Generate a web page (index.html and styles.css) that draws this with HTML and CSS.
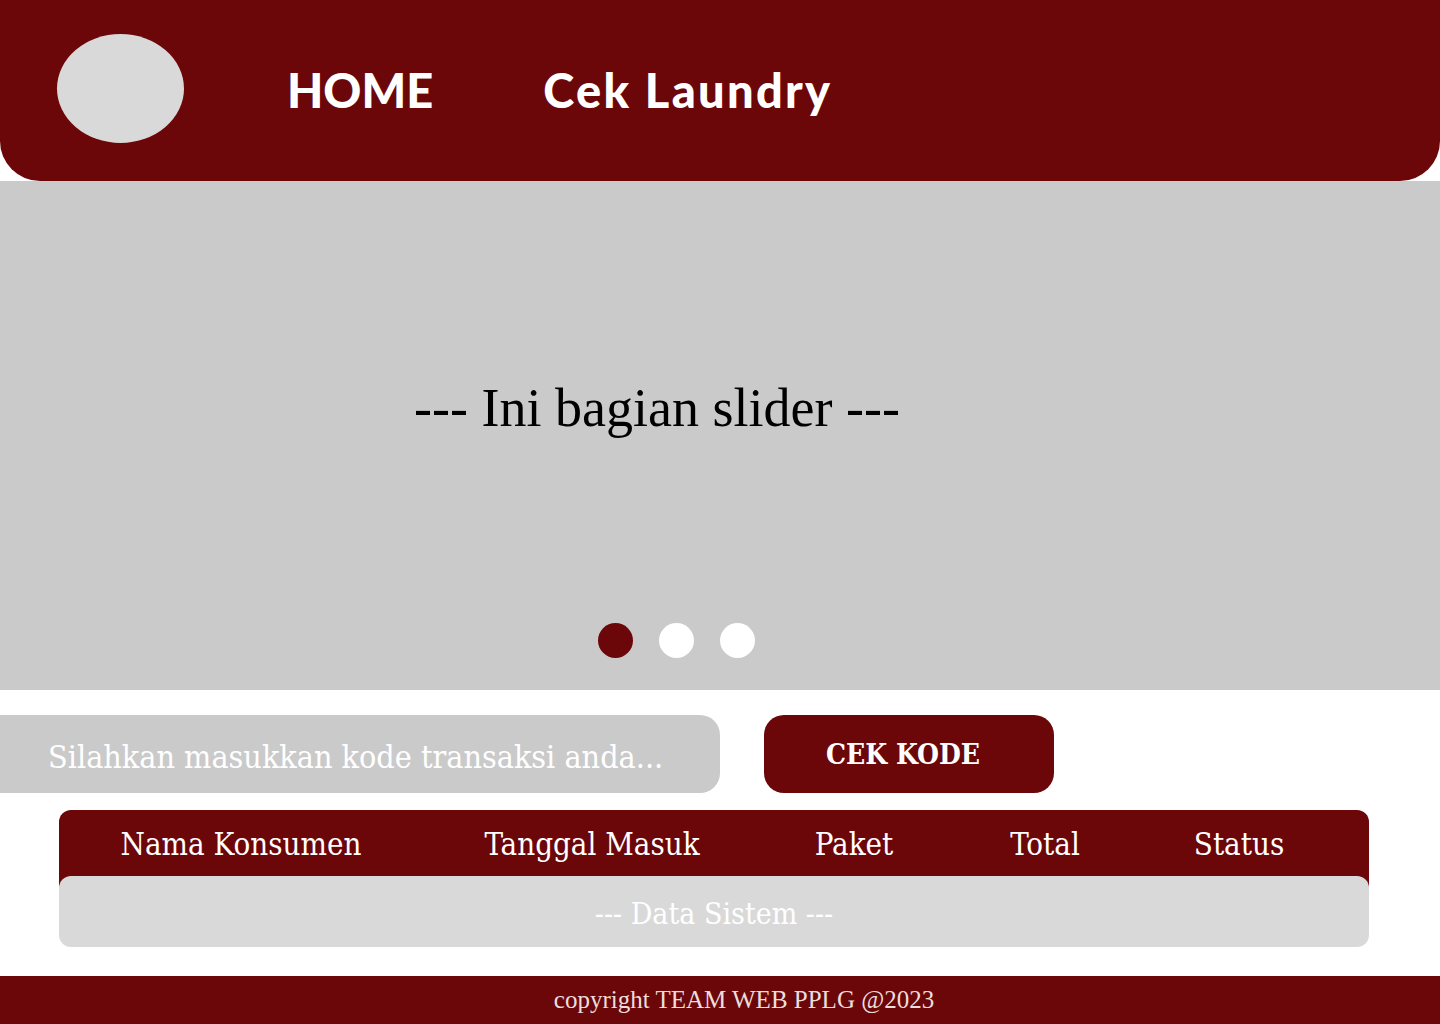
FILE: index.html
```html
<!DOCTYPE html>
<html lang="id">
<head>
<meta charset="utf-8">
<title>Cek Laundry</title>
<link rel="stylesheet" href="styles.css">
</head>
<body>
<header class="topbar">
  <div class="logo"></div>
  <nav class="nav">
    <a class="nav-link" href="#">HOME</a>
    <a class="nav-link nav-link-wide" href="#">Cek Laundry</a>
  </nav>
</header>
<section class="slider">
  <div class="slider-text">--- Ini bagian slider ---</div>
  <div class="dots">
    <span class="dot active"></span>
    <span class="dot"></span>
    <span class="dot"></span>
  </div>
</section>
<section class="search">
  <input class="search-input" type="text" placeholder="Silahkan masukkan kode transaksi anda...">
  <button class="search-btn" type="button">CEK KODE</button>
</section>
<section class="table">
  <div class="table-head">
    <div class="th">Nama Konsumen</div>
    <div class="th">Tanggal Masuk</div>
    <div class="th">Paket</div>
    <div class="th">Total</div>
    <div class="th">Status</div>
  </div>
  <div class="table-body">--- Data Sistem ---</div>
</section>
<footer class="footer">copyright TEAM WEB PPLG @2023</footer>
</body>
</html>
```
FILE: styles.css
```css
* { box-sizing: border-box; }
html, body { margin: 0; padding: 0; background: #ffffff; }
body { width: 1440px; overflow: hidden; }

.topbar {
  height: 181px;
  background: #6b0709;
  border-radius: 0 0 40px 40px;
  display: flex;
  align-items: center;
  padding-left: 57px;
}
.logo {
  width: 127px;
  height: 109px;
  border-radius: 50%;
  background: #d9d9d9;
  margin-top: -4px;
}
.nav {
  display: flex;
  align-items: center;
  gap: 110px;
  margin-left: 103px;
  margin-top: -2px;
}
.nav-link {
  font-family: "Lato", sans-serif;
  font-weight: 900;
  font-size: 47px;
  color: #ffffff;
  text-decoration: none;
}
.nav-link-wide { letter-spacing: 2.3px; }

.slider {
  height: 509px;
  background: #cbcaca;
  display: flex;
  flex-direction: column;
  align-items: center;
  padding-top: 192px;
}
.slider-text {
  font-family: "Liberation Serif", serif;
  font-size: 54px;
  line-height: 70px;
  color: #000000;
  margin-right: 126px;
}
.dots {
  display: flex;
  gap: 26px;
  margin-top: 180px;
  margin-right: 88px;
}
.dot {
  width: 35px;
  height: 35px;
  border-radius: 50%;
  background: #ffffff;
}
.dot.active { background: #6b0709; }

.search {
  display: flex;
  gap: 44px;
  margin-top: 25px;
}
.search-input {
  width: 720px;
  height: 78px;
  border: none;
  outline: none;
  border-radius: 0 20px 20px 0;
  background: #cbcaca;
  padding: 6px 0 0 48px;
  font-family: "DejaVu Serif", serif;
  font-stretch: condensed;
  font-size: 32px;
  color: #ffffff;
}
.search-input::placeholder { color: #ffffff; opacity: 1; }
.search-btn {
  width: 290px;
  height: 78px;
  border: none;
  border-radius: 20px;
  background: #6b0709;
  color: #ffffff;
  font-family: "DejaVu Serif", serif;
  font-stretch: condensed;
  font-weight: 700;
  font-size: 28px;
  padding: 0 12px 0 0;
}

.table {
  margin: 17px 71px 0 59px;
}
.table-head {
  display: grid;
  grid-template-columns: 364px 338px 186px 196px 192px;
  height: 78px;
  padding-bottom: 12px;
  background: #6b0709;
  border-radius: 12px 12px 0 0;
  align-items: center;
}
.th {
  text-align: center;
  font-family: "DejaVu Serif", serif;
  font-stretch: condensed;
  font-size: 31px;
  color: #ffffff;
  padding-top: 2px;
}
.table-body {
  position: relative;
  margin-top: -12px;
  height: 71px;
  border-radius: 12px;
  background: #d9d9d9;
  display: flex;
  align-items: center;
  justify-content: center;
  font-family: "DejaVu Serif", serif;
  font-stretch: condensed;
  font-size: 30px;
  color: #ffffff;
  padding-top: 4px;
}

.footer {
  margin-top: 29px;
  height: 48px;
  background: #6b0709;
  display: flex;
  align-items: center;
  justify-content: center;
  font-family: "Liberation Serif", serif;
  font-size: 25px;
  color: #ecdede;
  padding-left: 48px;
}
```
